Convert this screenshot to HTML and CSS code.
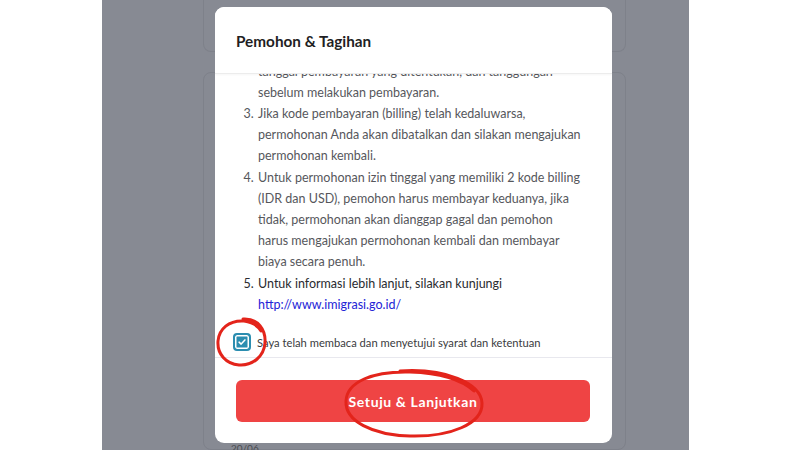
FILE: index.html
```html
<!DOCTYPE html>
<html lang="id">
<head>
<meta charset="utf-8">
<title>Pemohon &amp; Tagihan</title>
<link rel="stylesheet" href="styles.css">
</head>
<body>
<div class="canvas">
  <div class="side"></div>
  <div class="phone">
    <div class="bg-card bg-card-top"></div>
    <div class="bg-card bg-card-main">
      <div class="bg-date">20/06</div>
    </div>

    <div class="modal">
      <div class="modal-header">
        <h2 class="modal-title">Pemohon &amp; Tagihan</h2>
      </div>
      <div class="modal-body">
        <div class="scroll">
          <ol class="terms" start="2">
            <li class="cont">tanggal pembayaran yang ditentukan, dan tanggungan<br>sebelum melakukan pembayaran.</li>
            <li>Jika kode pembayaran (billing) telah kedaluwarsa,<br>permohonan Anda akan dibatalkan dan silakan mengajukan<br>permohonan kembali.</li>
            <li>Untuk permohonan izin tinggal yang memiliki 2 kode billing<br>(IDR dan USD), pemohon harus membayar keduanya, jika<br>tidak, permohonan akan dianggap gagal dan pemohon<br>harus mengajukan permohonan kembali dan membayar<br>biaya secara penuh.</li>
            <li class="strong">Untuk informasi lebih lanjut, silakan kunjungi<br><a class="link" href="#">http://www.imigrasi.go.id/</a></li>
          </ol>
        </div>
        <label class="agree">
          <span class="checkbox">
            <svg viewBox="0 0 12 12" width="10" height="10"><path d="M2.5 6.2 L5 8.5 L9.5 3.5" fill="none" stroke="#ffffff" stroke-width="1.8" stroke-linecap="round" stroke-linejoin="round"/></svg>
          </span>
          <span class="agree-text">Saya telah membaca dan menyetujui syarat dan ketentuan</span>
        </label>
      </div>
      <div class="modal-footer">
        <button class="btn-primary">Setuju &amp; Lanjutkan</button>
      </div>
    </div>
  </div>
  <div class="side side-right"></div>

  <svg class="annotations" width="800" height="450" viewBox="0 0 800 450">
    <path d="M243 319 C258 318 266 330 265 343 C264 356 253 366 239 365 C226 364 217 354 218 341 C219 329 229 320 244 321 C252 322 258 326 261 331" fill="none" stroke="#e3241b" stroke-width="3" stroke-linecap="round"/>
    <path d="M400 371 C445 368 481 383 482 403 C483 424 450 437 410 436 C372 435 345 421 346 401 C347 382 372 371 410 372 C440 373 462 380 474 391" fill="none" stroke="#e3241b" stroke-width="3" stroke-linecap="round"/>
  </svg>
</div>
</body>
</html>
```
FILE: styles.css
```css
* { box-sizing: border-box; }
html, body { margin: 0; padding: 0; }
body {
  width: 800px;
  height: 450px;
  overflow: hidden;
  background: #ffffff;
  font-family: "Lato", "Noto Sans", sans-serif;
}
.canvas {
  position: relative;
  display: flex;
  width: 800px;
  height: 450px;
}
.side { width: 102px; background: #ffffff; }
.side-right { flex: 1; }
.phone {
  position: relative;
  width: 587px;
  height: 450px;
  background: #878a93;
  overflow: hidden;
  display: flex;
  flex-direction: column;
  padding: 0 63px 0 101px;
  gap: 20px;
}
.bg-card {
  border: 1px solid #7e818a;
  border-radius: 8px;
  background: #878a93;
}
.bg-card-top {
  height: 60px;
  margin-top: -8px;
  border-top: none;
}
.bg-card-main {
  flex: 1;
  display: flex;
  align-items: flex-end;
  padding: 0 0 0 27px;
}
.bg-date {
  font-size: 10px;
  color: #4a4c52;
  margin-bottom: -5px;
}

.modal {
  position: absolute;
  left: 113px;
  top: 7px;
  width: 397px;
  height: 436px;
  background: #ffffff;
  border-radius: 9px;
  display: flex;
  flex-direction: column;
  overflow: hidden;
}
.modal-header {
  height: 67px;
  flex: none;
  display: flex;
  align-items: center;
  padding: 0 21px;
  border-bottom: 1px solid #ececec;
  box-shadow: 0 1px 2px rgba(0,0,0,0.04);
  position: relative;
  z-index: 1;
  background: #fff;
}
.modal-title {
  margin: 0;
  padding-top: 1px;
  font-size: 15.3px;
  font-weight: 700;
  color: #1f1f24;
}
.modal-body {
  flex: 1;
  display: flex;
  flex-direction: column;
  padding: 0 21px 0 21px;
  border-bottom: 1px solid #e8e8ee;
}
.scroll {
  height: 249px;
  overflow: hidden;
}
.terms {
  margin: -13.5px 0 0 0;
  padding-left: 21px;
  font-size: 12.5px;
  line-height: 21.2px;
  color: #56575c;
  white-space: nowrap;
}
.terms li { padding-left: 1px; }
.terms li.cont { list-style: none; }
.terms li.strong { color: #2a2b30; }
.link { color: #2323d6; text-decoration: none; }

.agree {
  display: flex;
  align-items: center;
  gap: 6px;
  margin: 10px 0 0 -3px;
  height: 18px;
}
.checkbox {
  width: 18px;
  height: 18px;
  border-radius: 4px;
  background: #2b8db0;
  border: 2px solid #2b8db0;
  box-shadow: inset 0 0 0 1.5px #ffffff;
  display: flex;
  align-items: center;
  justify-content: center;
}
.agree-text {
  font-size: 11.2px;
  color: #3a3b40;
}

.modal-footer {
  height: 85px;
  flex: none;
  padding: 22px 22px 0 21px;
}
.btn-primary {
  width: 100%;
  height: 42px;
  border: none;
  border-radius: 6px;
  background: #ef4444;
  color: #ffffff;
  font-family: "Lato", "Noto Sans", sans-serif;
  font-size: 14px;
  font-weight: 700;
  letter-spacing: 0.6px;
}

.annotations {
  position: absolute;
  left: 0;
  top: 0;
  pointer-events: none;
}
```
